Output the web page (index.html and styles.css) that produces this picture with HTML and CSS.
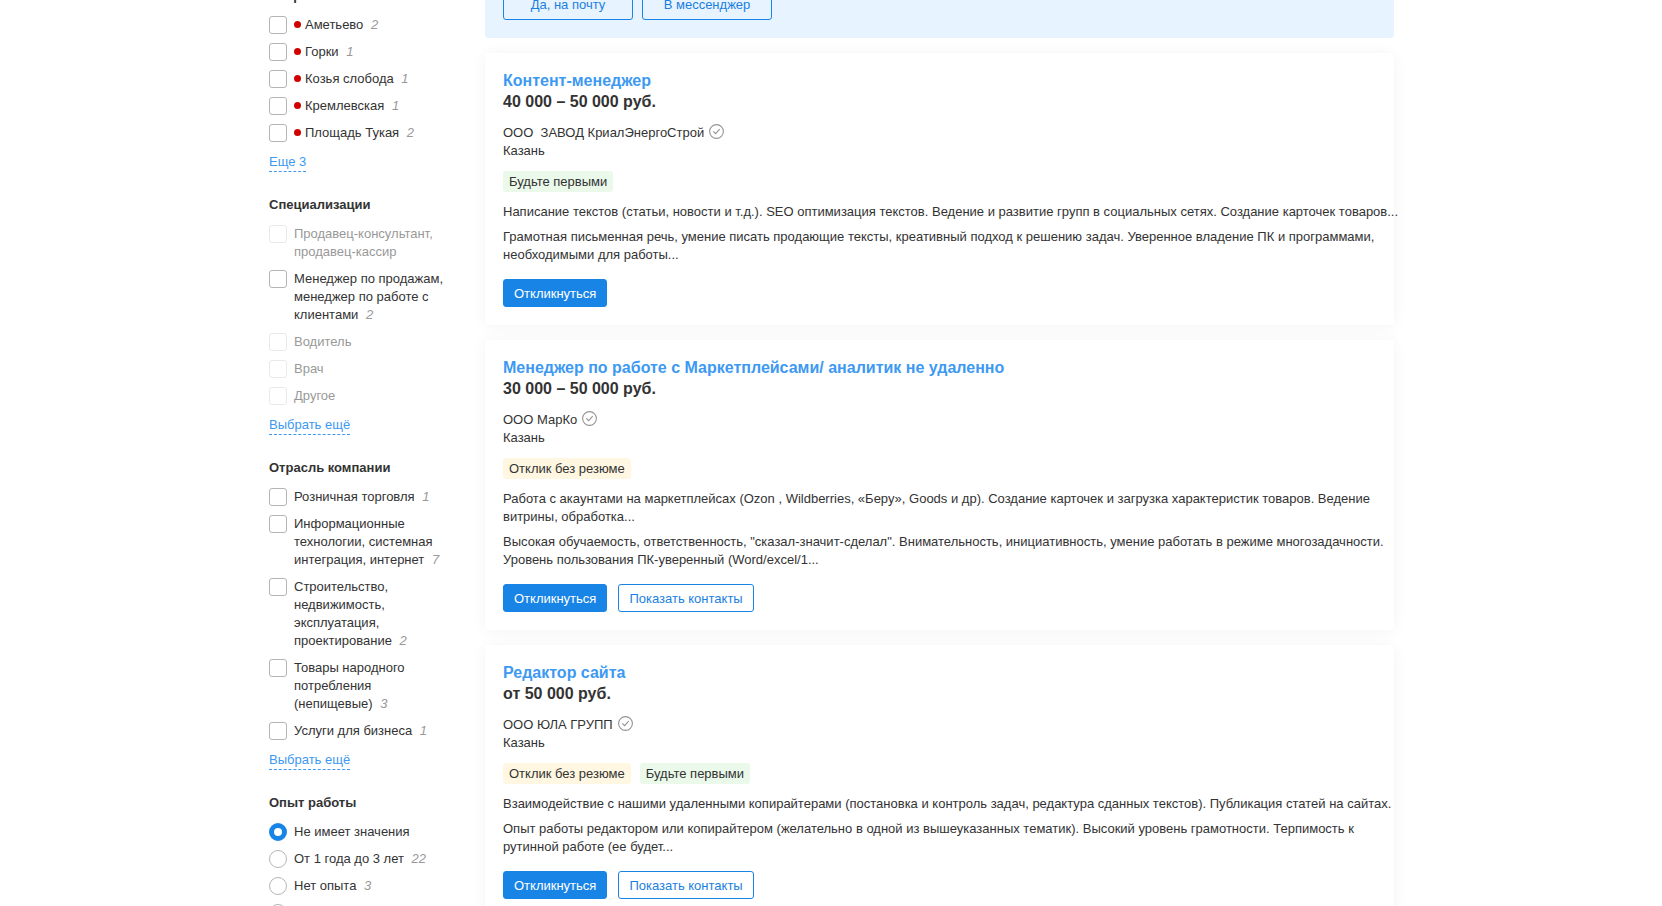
FILE: index.html
```html
<!DOCTYPE html>
<html lang="ru">
<head>
<meta charset="utf-8">
<meta name="viewport" content="width=device-width, initial-scale=1">
<title>Вакансии в Казани</title>
<link rel="stylesheet" href="styles.css">
</head>
<body>
<svg class="sprite" aria-hidden="true">
  <symbol id="verified" viewBox="0 0 15 15">
    <circle cx="7.5" cy="7.5" r="6.9" fill="none" stroke="#949494" stroke-width="1.1"/>
    <path d="M4.3 7.4l2.3 2.3 4.1-4.5" fill="none" stroke="#949494" stroke-width="1.1"/>
  </symbol>
</svg>
<div class="page">
  <aside class="filters">
    <section class="filter">
      <h3 class="filter-title">Метро</h3>
      <label class="option"><input class="check" type="checkbox"><span class="option-text"><span class="dot"></span>Аметьево <i class="count">2</i></span></label>
      <label class="option"><input class="check" type="checkbox"><span class="option-text"><span class="dot"></span>Горки <i class="count">1</i></span></label>
      <label class="option"><input class="check" type="checkbox"><span class="option-text"><span class="dot"></span>Козья слобода <i class="count">1</i></span></label>
      <label class="option"><input class="check" type="checkbox"><span class="option-text"><span class="dot"></span>Кремлевская <i class="count">1</i></span></label>
      <label class="option"><input class="check" type="checkbox"><span class="option-text"><span class="dot"></span>Площадь Тукая <i class="count">2</i></span></label>
      <a class="more" href="#">Еще 3</a>
    </section>
    <section class="filter">
      <h3 class="filter-title">Специализации</h3>
      <label class="option option-off"><input class="check" type="checkbox" disabled><span class="option-text">Продавец-консультант, продавец-кассир</span></label>
      <label class="option"><input class="check" type="checkbox"><span class="option-text">Менеджер по продажам, менеджер по работе с клиентами <i class="count">2</i></span></label>
      <label class="option option-off"><input class="check" type="checkbox" disabled><span class="option-text">Водитель</span></label>
      <label class="option option-off"><input class="check" type="checkbox" disabled><span class="option-text">Врач</span></label>
      <label class="option option-off"><input class="check" type="checkbox" disabled><span class="option-text">Другое</span></label>
      <a class="more" href="#">Выбрать ещё</a>
    </section>
    <section class="filter">
      <h3 class="filter-title">Отрасль компании</h3>
      <label class="option"><input class="check" type="checkbox"><span class="option-text">Розничная торговля <i class="count">1</i></span></label>
      <label class="option"><input class="check" type="checkbox"><span class="option-text">Информационные технологии, системная интеграция, интернет <i class="count">7</i></span></label>
      <label class="option"><input class="check" type="checkbox"><span class="option-text">Строительство, недвижимость, эксплуатация, проектирование <i class="count">2</i></span></label>
      <label class="option"><input class="check" type="checkbox"><span class="option-text">Товары народного потребления (непищевые) <i class="count">3</i></span></label>
      <label class="option"><input class="check" type="checkbox"><span class="option-text">Услуги для бизнеса <i class="count">1</i></span></label>
      <a class="more" href="#">Выбрать ещё</a>
    </section>
    <section class="filter">
      <h3 class="filter-title">Опыт работы</h3>
      <label class="option"><input class="check check-radio" type="radio" name="exp" checked><span class="option-text">Не имеет значения</span></label>
      <label class="option"><input class="check check-radio" type="radio" name="exp"><span class="option-text">От 1 года до 3 лет <i class="count">22</i></span></label>
      <label class="option"><input class="check check-radio" type="radio" name="exp"><span class="option-text">Нет опыта <i class="count">3</i></span></label>
      <label class="option"><input class="check check-radio" type="radio" name="exp" aria-label="Более 3 лет"></label>
    </section>
  </aside>

  <main class="results">
    <div class="subscribe">
      <button class="btn btn-outline btn-wide" type="button">Да, на почту</button>
      <button class="btn btn-outline btn-wide" type="button">В мессенджер</button>
    </div>

    <article class="card">
      <h2 class="card-title"><a class="card-link" href="#">Контент-менеджер</a></h2>
      <div class="salary">40&nbsp;000 – 50&nbsp;000 руб.</div>
      <div class="company">ООО&nbsp; ЗАВОД КриалЭнергоСтрой<svg class="verified" aria-hidden="true"><use href="#verified"/></svg></div>
      <div class="city">Казань</div>
      <div class="tags"><span class="tag tag-green">Будьте первыми</span></div>
      <p class="text">Написание текстов (статьи, новости и т.д.). SEO оптимизация текстов. Ведение и развитие групп в социальных сетях. Создание карточек товаров...</p>
      <p class="text">Грамотная письменная речь, умение писать продающие тексты, креативный подход к решению задач. Уверенное владение ПК и программами, <br class="line">необходимыми для работы...</p>
      <div class="actions"><button class="btn btn-primary" type="button">Откликнуться</button></div>
    </article>

    <article class="card">
      <h2 class="card-title"><a class="card-link" href="#">Менеджер по работе с Маркетплейсами/ аналитик не удаленно</a></h2>
      <div class="salary">30&nbsp;000 – 50&nbsp;000 руб.</div>
      <div class="company">ООО МарКо<svg class="verified" aria-hidden="true"><use href="#verified"/></svg></div>
      <div class="city">Казань</div>
      <div class="tags"><span class="tag tag-cream">Отклик без резюме</span></div>
      <p class="text">Работа с акаунтами на маркетплейсах (Ozon , Wildberries, «Беру», Goods и др). Создание карточек и загрузка характеристик товаров. Ведение <br class="line">витрины, обработка...</p>
      <p class="text">Высокая обучаемость, ответственность, "сказал-значит-сделал". Внимательность, инициативность, умение работать в режиме многозадачности. <br class="line">Уровень пользования ПК-уверенный (Word/excel/1...</p>
      <div class="actions"><button class="btn btn-primary" type="button">Откликнуться</button><button class="btn btn-outline" type="button">Показать контакты</button></div>
    </article>

    <article class="card">
      <h2 class="card-title"><a class="card-link" href="#">Редактор сайта</a></h2>
      <div class="salary">от 50&nbsp;000 руб.</div>
      <div class="company">ООО ЮЛА ГРУПП<svg class="verified" aria-hidden="true"><use href="#verified"/></svg></div>
      <div class="city">Казань</div>
      <div class="tags"><span class="tag tag-cream">Отклик без резюме</span><span class="tag tag-green">Будьте первыми</span></div>
      <p class="text">Взаимодействие с нашими удаленными копирайтерами (постановка и контроль задач, редактура сданных текстов). Публикация статей на сайтах.</p>
      <p class="text">Опыт работы редактором или копирайтером (желательно в одной из вышеуказанных тематик). Высокий уровень грамотности. Терпимость к <br class="line">рутинной работе (ее будет...</p>
      <div class="actions"><button class="btn btn-primary" type="button">Откликнуться</button><button class="btn btn-outline" type="button">Показать контакты</button></div>
    </article>
  </main>
</div>
</body>
</html>
```
FILE: styles.css
```css
* { box-sizing: border-box; }
html { overflow: hidden; }
body {
  margin: 0;
  background: #fff;
  color: #333;
  font: 13px/18px Arial, "Liberation Sans", sans-serif;
}
.sprite { display: none; }

.page {
  display: flex;
  gap: 36px;
  max-width: 1126px;
  margin: -13px auto 0;
  padding-left: 1px;
}

/* Filters */
.filters { flex: 0 0 180px; }
.filter { margin-bottom: 24px; }
.filter-title {
  margin: 0 0 11px;
  font-size: 13px;
  line-height: 18px;
}
.option {
  display: flex;
  gap: 7px;
  margin-bottom: 9px;
}
.option-text { flex: 1; }
.option-off { color: #999; }
.check {
  appearance: none;
  flex: none;
  width: 18px;
  height: 18px;
  margin: 0;
  border: 1px solid #b5b5b5;
  border-radius: 3px;
  background: #fff;
}
.check:disabled { border-color: #e9e9e9; }
.check-radio { border-radius: 50%; }
.check-radio:checked { border: 5px solid #1884e6; }
.dot {
  display: inline-block;
  width: 7px;
  height: 7px;
  margin-right: 4px;
  border-radius: 50%;
  background: #d10000;
  vertical-align: 1px;
}
.count {
  margin-left: 4px;
  color: #999;
}
.more {
  display: block;
  width: fit-content;
  margin-top: 11px;
  color: #3d99f2;
  text-decoration: none;
  border-bottom: 1px dashed #3d99f2;
}

/* Results */
.results {
  flex: 1;
  min-width: 0;
  display: flex;
  flex-direction: column;
  gap: 15px;
}
.subscribe {
  display: flex;
  gap: 9px;
  padding: 1px 18px 18px;
  border-radius: 4px;
  background: #e7f3ff;
}
.card {
  padding: 17px 18px 18px;
  border-radius: 4px;
  background: #fff;
  box-shadow: 0 1px 15px rgba(0, 30, 20, 0.05);
}
.card-title,
.salary {
  margin: 0;
  font-size: 16px;
  line-height: 21px;
  font-weight: bold;
}
.card-link {
  color: #3d99f2;
  text-decoration: none;
}
.company {
  display: flex;
  align-items: flex-start;
  gap: 5px;
  margin-top: 12px;
}
.verified {
  width: 15px;
  height: 15px;
}
.tags {
  display: flex;
  gap: 9px;
  margin: 11px 0;
}
.tag {
  padding: 0 6px;
  border-radius: 3px;
  line-height: 21px;
}
.tag-green { background: #eaf9ea; }
.tag-cream { background: #fff7e1; }
.text { margin: 0 0 7px; }
.line { display: none; }
.actions {
  display: flex;
  gap: 11px;
  margin-top: 15px;
}
.btn {
  height: 28px;
  padding: 0 10px;
  border: 1px solid #1884e6;
  border-radius: 3px;
  font: inherit;
  line-height: 25px;
}
.btn-primary {
  background: #1884e6;
  color: #fff;
}
.btn-outline {
  background: transparent;
  color: #1b7fdf;
}
.btn-wide {
  height: 32px;
  min-width: 130px;
}

@media (min-width: 1200px) {
  .text { white-space: nowrap; }
  .line { display: inline; }
}
```
